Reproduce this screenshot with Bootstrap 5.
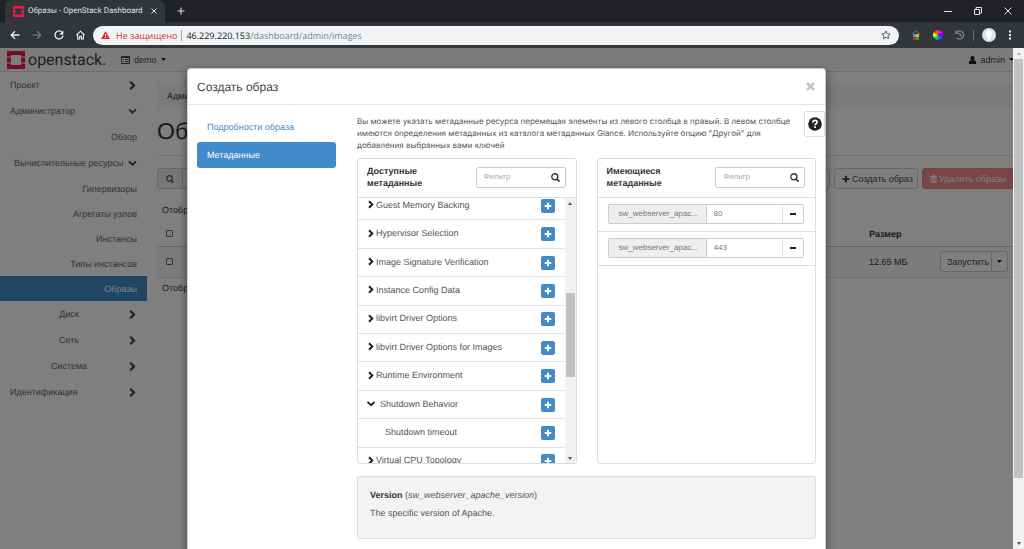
<!DOCTYPE html>
<html lang="ru">
<head>
<meta charset="utf-8">
<meta name="viewport" content="width=device-width, initial-scale=1">
<title>Образы - OpenStack Dashboard</title>
<link href="https://cdn.jsdelivr.net/npm/bootstrap@5.3.0/dist/css/bootstrap.min.css" rel="stylesheet">
<style>
body{font:9px/12px "Liberation Sans",Arial,sans-serif;color:#333;height:100vh;overflow:hidden;background:#fff;text-rendering:geometricPrecision}
svg{display:block;flex:none}
a{text-decoration:none}
button{font:inherit;color:inherit}
.win{height:100vh}
/* browser frame */
.tabstrip{height:22px;background:#202124;color:#dfe1e5;font-family:Roboto,"Noto Sans",sans-serif}
.tab-cur{width:160px;height:22px;margin-left:5px;padding:0 8px;background:#323639;border-radius:6px 6px 0 0;font-size:8px;white-space:nowrap}
.plain{border:0;background:none;padding:0;display:flex;align-items:center;justify-content:center}
.toolbar{height:26px;background:#323639;padding:0 12px 0 10px;color:#f1f3f4}
.omni{height:19px;border-radius:10px;background:#f1f3f4;margin-left:8px;padding:0 8px;font:9px/19px "Open Sans","Noto Sans",sans-serif;color:#80868b}
.omni .warn{color:#d93025;margin-left:6px}
.url b{font-weight:400;color:#202124}
.rule{width:1px;height:11px;background:#9aa0a6}
.avatar{width:14px;height:14px;border-radius:50%;background:#dfe1e5}
/* page */
.stage{position:relative;min-width:0;overflow:hidden}
.topnav{height:24px;background:#f8f8f8;border-bottom:1px solid #dadada;padding:0 0 0 7px;color:#444}
.brand-txt{font:16px/20px Roboto,sans-serif;color:#3c3c3c;width:77px}
.side{width:147px;flex:none;color:#666}
.side a{display:flex;align-items:center;justify-content:flex-end;height:25px;padding:0 10px;color:inherit}
.side a.grp{height:26px;justify-content:space-between}
.side a.on{background:#428bca;color:#fff}
.side svg{color:#444}
.mainarea{flex:none;width:calc(100% - 141px);padding:12px 0 0 10px}
.crumb{height:24px;background:#f5f5f5;border-radius:3px;padding:6px 10px}
.ttl{font-size:23px;line-height:28px;font-weight:400;margin:9px 0 10px;color:#333}
.bar-act{border-top:1px solid #e4e4e4;padding-top:12px}
.ob{height:21px;border:1px solid #ccc;border-radius:3px;background:#fff;display:flex;align-items:center;gap:2px;padding:0 7px;white-space:nowrap;color:#444}
.ob.del{background:#f08c8c;border-color:#ee8080;color:#fff;width:97px}
.ob.new{width:84px}
.ob.run{width:52px;padding:0 6px}
.srch{height:21px;border:1px solid #ccc;border-radius:3px;display:flex;color:#555}
.srch span{width:25px;background:#eee;border-right:1px solid #ccc;display:flex;align-items:center;justify-content:center}
.srch input{border:0;background:none;min-width:0;padding:0 4px;font:inherit}
.count{margin:0;padding:15px 5px 6px}
.imgs{width:100%;table-layout:fixed;border-collapse:collapse}
.imgs th,.imgs td{padding:0 9px;vertical-align:middle}
.imgs th{height:24px}
.imgs thead{border-bottom:1px solid #ccc}
.imgs tbody tr{height:31px;background:#f9f9f9;border-bottom:1px solid #ddd}
.imgs input{display:block;appearance:none;width:7px;height:7px;border:1px solid #666;border-radius:1px;margin:0}
.c-size{width:80px}
.c-act{width:79px}
/* scrollbars */
.sbar{width:11px;background:#f1f1f1;flex:none;display:flex;flex-direction:column;align-items:center;padding:4px 0}
.sbar i{width:9px;background:#c1c1c1}
.tri{border:2px solid transparent;border-top:0;border-bottom:3px solid #555}
.tri.dn{border-top:3px solid #555;border-bottom:0}
.tri.off{border-bottom-color:#aaa}
/* dialog */
.shade{position:absolute;inset:0;background:rgba(0,0,0,.5);display:flex;justify-content:center;align-items:flex-start;padding-top:20px}
.dlg{width:639px;background:#fff;border:1px solid rgba(0,0,0,.2);border-radius:4px;box-shadow:0 3px 9px rgba(0,0,0,.5);height:600px;color:#555}
.dlg-head{height:36px;border-bottom:1px solid #e5e5e5;padding:0 9px;color:#444}
.dlg-head h2{font-size:12px;line-height:16px;margin:0}
.steps{width:139px;flex:none;padding-top:9px}
.steps a{display:block;height:26px;line-height:26px;padding:0 10px;margin-bottom:2px;border-radius:3px;color:#428bca}
.steps a.on{background:#428bca;color:#fff}
.content-col{min-width:0;padding-left:21px}
.intro{height:53px}
.intro p{margin:0;padding-top:10px;white-space:nowrap;width:0;font-family:Inter,"Liberation Sans",sans-serif;font-size:8px}
.help{width:21px;height:26px;border:1px solid #ddd;border-radius:3px 0 0 3px;background:#fff;color:#333;margin-top:6px}
.pane{border:1px solid #ddd;border-radius:3px;height:306px;overflow:hidden;flex:1 1 0;min-width:0}
.pane-head{height:39px;border-bottom:1px solid #ddd;padding:0 10px 2px 9px}
.pane-head h3{font-size:9px;line-height:12px;font-weight:700;margin:0;color:#333;width:80px}
.filt{width:90px;height:21px;border:1px solid #ccc;border-radius:2px;padding:0 5px 0 7px;color:#333}
.filt input{border:0;padding:0;width:100%;min-width:0;font-size:8px;outline:0}
.filt input::placeholder{color:#aaa}
.scroller{height:266px;overflow:hidden}
.rows{height:284px;margin-top:-6px;display:flex;flex-direction:column}
.rows>div{flex:1;display:flex;align-items:center;justify-content:space-between;border-bottom:1px solid #e2e2e2;padding:0 10px 0 9px}
.rows a{display:flex;align-items:center;gap:1px;color:inherit;margin-top:-2px}
.rows a svg{color:#222}
.rows a.sub-it{padding-left:18px}
.rows .add{width:14px;height:14px;background:#428bca;border-radius:2px;color:#fff}
.pair{height:34px;border-bottom:1px solid #ddd;padding:0 11px 2px 10px}
.pair>div{height:20px;border:1px solid #ccc;border-radius:2px;min-width:0}
.pair label{width:98px;flex:none;background:#eee;border-right:1px solid #ccc;padding-left:10px;line-height:18px;color:#777;font-size:8px}
.pair input{border:0;min-width:0;width:0;padding:0 7px;font-size:8px;color:#777;flex:1}
.pair button{width:21px;flex:none;color:#222}
.note{margin-top:12px;height:63px;background:#f3f3f3;border:1px solid #ddd;border-radius:2px;padding:12px}
.note p{margin:0 0 6px}
.note b{color:#333}
</style>
</head>
<body>
<svg width="0" height="0" class="position-absolute">
<defs>
<symbol id="cr" viewBox="0 0 8 8"><path d="M2 .7 5.300 4 2 7.300" fill="none" stroke="currentColor" stroke-width="2"/></symbol>
<symbol id="cd" viewBox="0 0 8 8"><path d="M.5 2.400 4 5.600 7.500 2.400" fill="none" stroke="currentColor" stroke-width="1.900"/></symbol>
<symbol id="pl" viewBox="0 0 8 8"><path d="M4 .7v6.600M.7 4h6.600" stroke="currentColor" stroke-width="2"/></symbol>
<symbol id="mg" viewBox="0 0 8 8"><circle cx="3.400" cy="3.400" r="2.700" fill="none" stroke="currentColor" stroke-width="1.200"/><path d="M5.200 5.200 7.600 7.600" stroke="currentColor" stroke-width="1.500"/></symbol>
<symbol id="os" viewBox="0 0 18 18"><path d="M1 0h16a1 1 0 0 1 1 1v4.500h-4V4H4v1.500H0V1a1 1 0 0 1 1-1zM0 6.500h4v5H0zM14 6.500h4v5h-4zM0 12.500h4V14h10v-1.500h4V17a1 1 0 0 1-1 1H1a1 1 0 0 1-1-1z" fill="currentColor"/></symbol>
</defs>
</svg>
<div class="win d-flex flex-column">
  <header>
    <div class="tabstrip d-flex align-items-center">
      <div class="tab-cur d-flex align-items-center">
        <svg width="11" height="11" style="color:#ed1944"><use href="#os"/></svg>
        <span class="ms-1 flex-grow-1">Образы - OpenStack Dashboard</span>
        <button class="plain" aria-label="Закрыть вкладку"><svg width="6" height="6" viewBox="0 0 6 6"><path d="m.5.5 5 5m0-5-5 5" stroke="currentColor"/></svg></button>
      </div>
      <button class="plain ms-2 ps-1" aria-label="Новая вкладка"><svg width="8" height="8" viewBox="0 0 9 9"><path d="M4.500.500v8M.5 4.500h8" stroke="currentColor" stroke-width="1.200"/></svg></button>
      <div class="ms-auto d-flex align-items-center pe-2 me-1" style="gap:22px">
        <button class="plain" aria-label="Свернуть"><svg width="8" height="8" viewBox="0 0 8 8"><path d="M0 4.500h8" stroke="currentColor"/></svg></button>
        <button class="plain" aria-label="Окно"><svg width="8" height="8" viewBox="0 0 8 8"><path d="M.5 2.500h5v5h-5zM2 2V.5h5.500V6H6" fill="none" stroke="currentColor"/></svg></button>
        <button class="plain" aria-label="Закрыть"><svg width="8" height="8" viewBox="0 0 8 8"><path d="m.5.5 7 7m0-7-7 7" stroke="currentColor"/></svg></button>
      </div>
    </div>
    <div class="toolbar d-flex align-items-center">
      <div class="d-flex" style="gap:12px">
        <button class="plain" aria-label="Назад"><svg width="10" height="10" viewBox="0 0 10 10"><path d="M9.500 5H1.500M5 1.200 1.200 5 5 8.800" fill="none" stroke="currentColor" stroke-width="1.300"/></svg></button>
        <button class="plain" aria-label="Вперёд"><svg width="10" height="10" viewBox="0 0 10 10"><path d="M.5 5h8M5 1.200 8.800 5 5 8.800" fill="none" stroke="#7d8185" stroke-width="1.200"/></svg></button>
        <button class="plain" aria-label="Обновить"><svg width="10" height="10" viewBox="0 0 10 10"><path d="M8.300 2.600A4 4 0 1 0 9 5.600" fill="none" stroke="currentColor" stroke-width="1.300"/><path d="M9.400.5v4h-4z" fill="currentColor"/></svg></button>
        <button class="plain" aria-label="Домой"><svg width="9" height="10" viewBox="0 0 9 10"><path d="M.5 5 4.500 1.200 8.500 5M1.600 4.500V9h2V6.200h1.800V9h2V4.500" fill="none" stroke="currentColor" stroke-width="1.100"/></svg></button>
      </div>
      <div class="omni d-flex align-items-center flex-grow-1">
        <svg width="9" height="8" viewBox="0 0 9 8"><path d="M4.500 0 9 8H0z" fill="#d93025"/><path d="M4.500 3v2.400M4.500 6v1" stroke="#fff" stroke-width=".9"/></svg>
        <span class="warn">Не защищено</span><span class="rule mx-1"></span>
        <span class="url flex-grow-1"><b>46.229.220.153</b>/dashboard/admin/images</span>
        <button class="plain" aria-label="В закладки"><svg width="10" height="10" viewBox="0 0 10 10"><path d="m5 .9 1.200 2.700 3 .3L7 5.900l.6 2.900L5 7.300 2.400 8.800 3 5.900.8 3.900l3-.3z" fill="none" stroke="#5f6368"/></svg></button>
      </div>
      <div class="d-flex align-items-center ms-2 ps-1">
        <svg width="10" height="11" viewBox="0 0 10 11"><path d="M.5 4.500 5 1l4.500 3.500" fill="none" stroke="#6d7074"/><path d="M2 4h3v3H2z" fill="#2aa7e0"/><path d="M5 4h3v3H5z" fill="#f5a623"/><path d="M2 7h3v3H2z" fill="#d22"/><path d="M5 7h3v3H5z" fill="#2a3"/></svg>
        <svg class="ms-2 me-1 ps-1" width="14" height="10" viewBox="0 0 10 10"><path d="M5 5V0a5 5 0 0 1 4.300 2.500z" fill="#f0f"/><path d="m5 5 4.300-2.500a5 5 0 0 1 0 5z" fill="#80f"/><path d="m5 5 4.300 2.500A5 5 0 0 1 5 10z" fill="#06f"/><path d="M5 5v5A5 5 0 0 1 .7 7.500z" fill="#0d5"/><path d="M5 5 .7 7.500a5 5 0 0 1 0-5z" fill="#df0"/><path d="M5 5 .7 2.500A5 5 0 0 1 5 0z" fill="#f50"/></svg>
        <svg class="ms-2" width="10" height="10" viewBox="0 0 10 10"><path d="M1.200 3A4 4 0 1 1 2 8M5 2.800V5.200L6.800 6.300M1 .8v2.700h2.700" fill="none" stroke="#85898d" stroke-width="1.200"/></svg>
        <span class="rule mx-2 opacity-50"></span>
        <svg class="avatar" viewBox="0 0 14 14"><ellipse cx="7" cy="6" rx="3" ry="3.800" fill="#fff"/><path d="M6 9h2v3H6z" fill="#fff"/></svg>
        <button class="plain ms-2 ps-1" aria-label="Меню"><svg width="4" height="10" viewBox="0 0 4 10"><path d="M1 .5h2v2H1zM1 4h2v2H1zM1 7.500h2v2H1z" fill="currentColor"/></svg></button>
      </div>
    </div>
  </header>

  <div class="d-flex flex-grow-1 overflow-hidden">
    <div class="stage flex-grow-1">
      <nav class="topnav d-flex align-items-center">
        <svg width="18" height="18" style="color:#ed1944"><use href="#os"/></svg>
        <span class="brand-txt" style="margin-left:3px">openstack.</span>
        <button class="plain ms-3 gap-1"><svg width="9" height="8" viewBox="0 0 9 8"><path d="M.5.5h8v7h-8zM.5 1.500h8M2 3.500h1M4 3.500h3.500M2 5.500h1M4 5.500h3.500" fill="none" stroke="#444"/></svg>demo<svg width="5" height="3"><path d="M0 0h5L2.500 3z" fill="#222"/></svg></button>
        <button class="plain ms-auto gap-1"><svg width="7" height="8" viewBox="0 0 7 8"><circle cx="3.500" cy="2.200" r="2.100" fill="#222"/><path d="M0 8V6q0-2 3.500-2T7 6v2z" fill="#222"/></svg>admin<svg width="4" height="3"><path d="M0 0h5L2.500 3z" fill="#222"/></svg></button>
      </nav>
      <div class="d-flex">
        <nav class="side">
          <a class="grp" href="#">Проект<svg width="9" height="9"><use href="#cr"/></svg></a>
          <a class="grp" href="#">Администратор<svg width="9" height="8"><use href="#cd"/></svg></a>
          <a class="grp justify-content-end" href="#">Обзор</a>
          <a class="grp" href="#"><span class="ps-1 text-nowrap">Вычислительные ресурсы</span><svg width="9" height="8"><use href="#cd"/></svg></a>
          <a href="#">Гипервизоры</a>
          <a href="#">Агрегаты узлов</a>
          <a href="#">Инстансы</a>
          <a href="#">Типы инстансов</a>
          <a href="#" class="on">Образы</a>
          <a class="grp" href="#"><span class="flex-grow-1 text-center">Диск</span><svg width="9" height="9"><use href="#cr"/></svg></a>
          <a class="grp" href="#"><span class="flex-grow-1 text-center">Сеть</span><svg width="9" height="9"><use href="#cr"/></svg></a>
          <a class="grp" href="#"><span class="flex-grow-1 text-center">Система</span><svg width="9" height="9"><use href="#cr"/></svg></a>
          <a class="grp" href="#">Идентификация<svg width="9" height="9"><use href="#cr"/></svg></a>
        </nav>
        <main class="mainarea">
          <div class="crumb">Админ</div>
          <h1 class="ttl">Образы</h1>
          <div class="bar-act d-flex gap-1">
            <div class="srch flex-grow-1"><span><svg width="8" height="8"><use href="#mg"/></svg></span><input aria-label="Поиск" placeholder="Нажмите"></div>
            <button class="ob new"><svg width="8" height="8"><use href="#pl"/></svg>Создать образ</button>
            <button class="ob del"><svg width="7" height="8" viewBox="0 0 7 8"><path d="M0 1.500h7M2.300 1V.5h2.400V1M1 2.500v5h5v-5zM2.700 3v4M4.300 3v4" fill="none" stroke="#fff" stroke-width=".9"/></svg>Удалить образы</button>
          </div>
          <p class="count">Отображено</p>
          <table class="imgs">
            <colgroup><col><col class="c-size"><col class="c-act"></colgroup>
            <thead><tr><th><input type="checkbox" aria-label="Выбрать все"></th><th>Размер</th><th></th></tr></thead>
            <tbody><tr><td><input type="checkbox" aria-label="Выбрать образ"></td><td>12.65 МБ</td><td class="p-0"><div class="d-flex"><button class="ob run rounded-end-0">Запустить</button><button class="ob rounded-start-0 border-start-0 px-1" aria-label="Действия"><svg width="7" height="3"><path d="M1 0h5L3.500 3z" fill="#222"/></svg></button></div></td></tr></tbody>
          </table>
          <p class="count pt-1">Отображено</p>
        </main>
      </div>

      <div class="shade">
        <section class="dlg" role="dialog" aria-labelledby="dt">
          <div class="dlg-head d-flex align-items-center justify-content-between">
            <h2 id="dt" class="fw-normal">Создать образ</h2>
            <button class="plain" aria-label="Закрыть окно"><svg width="11" height="9" viewBox="0 0 10 9"><path d="m1.500 1 7 7m0-7-7 7" stroke="#c4c4c4" stroke-width="2.600"/></svg></button>
          </div>
          <div class="d-flex" style="padding-left:9px">
            <nav class="steps">
              <a href="#">Подробности образа</a>
              <a href="#" class="on">Метаданные</a>
            </nav>
            <div class="content-col flex-grow-1">
              <div class="intro d-flex">
                <p class="flex-grow-1">Вы можете указать метаданные ресурса перемещая элементы из левого столбца в правый. В левом столбце<br>имеются определения метаданных из каталога метаданных Glance. Используйте опцию "Другой" для<br>добавления выбранных вами ключей</p>
                <button class="plain help flex-shrink-0" aria-label="Помощь"><svg width="14" height="14" viewBox="0 0 14 14"><circle cx="7" cy="7" r="6.800" fill="#222"/><path d="M4.900 5.400q0-2 2.100-2t2.100 1.800q0 1-1.200 1.700-.9.500-.9 1.300" fill="none" stroke="#fff" stroke-width="1.700"/><path d="M6.100 9.300h1.800v1.700H6.100z" fill="#fff"/></svg></button>
              </div>
              <div style="padding-right:9px">
              <div class="d-flex" style="gap:20px">
                <div class="pane">
                  <div class="pane-head d-flex align-items-center justify-content-between">
                    <h3>Доступные метаданные</h3>
                    <div class="filt d-flex align-items-center"><input placeholder="Фильтр" aria-label="Фильтр доступных"><svg width="9" height="9"><use href="#mg"/></svg></div>
                  </div>
                  <div class="scroller d-flex">
                    <div class="rows flex-grow-1">
                      <div><a href="#"><svg width="8" height="9"><use href="#cr"/></svg>Guest Memory Backing</a><button class="plain add" aria-label="Добавить"><svg width="8" height="8"><use href="#pl"/></svg></button></div>
                      <div><a href="#"><svg width="8" height="9"><use href="#cr"/></svg>Hypervisor Selection</a><button class="plain add" aria-label="Добавить"><svg width="8" height="8"><use href="#pl"/></svg></button></div>
                      <div><a href="#"><svg width="8" height="9"><use href="#cr"/></svg>Image Signature Verification</a><button class="plain add" aria-label="Добавить"><svg width="8" height="8"><use href="#pl"/></svg></button></div>
                      <div><a href="#"><svg width="8" height="9"><use href="#cr"/></svg>Instance Config Data</a><button class="plain add" aria-label="Добавить"><svg width="8" height="8"><use href="#pl"/></svg></button></div>
                      <div><a href="#"><svg width="8" height="9"><use href="#cr"/></svg>libvirt Driver Options</a><button class="plain add" aria-label="Добавить"><svg width="8" height="8"><use href="#pl"/></svg></button></div>
                      <div><a href="#"><svg width="8" height="9"><use href="#cr"/></svg>libvirt Driver Options for Images</a><button class="plain add" aria-label="Добавить"><svg width="8" height="8"><use href="#pl"/></svg></button></div>
                      <div><a href="#"><svg width="8" height="9"><use href="#cr"/></svg>Runtime Environment</a><button class="plain add" aria-label="Добавить"><svg width="8" height="8"><use href="#pl"/></svg></button></div>
                      <div><a href="#"><svg class="me-1" width="8" height="9"><use href="#cd"/></svg>Shutdown Behavior</a><button class="plain add" aria-label="Добавить"><svg width="8" height="8"><use href="#pl"/></svg></button></div>
                      <div><a href="#" class="sub-it">Shutdown timeout</a><button class="plain add" aria-label="Добавить"><svg width="8" height="8"><use href="#pl"/></svg></button></div>
                      <div><a href="#"><svg width="8" height="9"><use href="#cr"/></svg>Virtual CPU Topology</a><button class="plain add" aria-label="Добавить"><svg width="8" height="8"><use href="#pl"/></svg></button></div>
                    </div>
                    <div class="sbar"><span class="tri"></span><i style="height:84px;margin:88px 0 auto"></i><span class="tri dn"></span></div>
                  </div>
                </div>
                <div class="pane">
                  <div class="pane-head d-flex align-items-center justify-content-between">
                    <h3>Имеющиеся метаданные</h3>
                    <div class="filt d-flex align-items-center"><input placeholder="Фильтр" aria-label="Фильтр имеющихся"><svg width="9" height="9"><use href="#mg"/></svg></div>
                  </div>
                  <div class="pair d-flex align-items-center"><div class="d-flex flex-grow-1"><label for="p1">sw_webserver_apac...</label><input id="p1" value="80"><button class="plain border-start" aria-label="Убрать"><svg width="6" height="2"><path d="M0 1h6" stroke="currentColor" stroke-width="2"/></svg></button></div></div>
                  <div class="pair d-flex align-items-center"><div class="d-flex flex-grow-1"><label for="p2">sw_webserver_apac...</label><input id="p2" value="443"><button class="plain border-start" aria-label="Убрать"><svg width="6" height="2"><path d="M0 1h6" stroke="currentColor" stroke-width="2"/></svg></button></div></div>
                </div>
              </div>
              <div class="note"><p><b>Version</b> (<em>sw_webserver_apache_version</em>)</p><p>The specific version of Apache.</p></div>
              </div>
            </div>
          </div>
        </section>
      </div>
    </div>
    <div class="sbar"><span class="tri off"></span><i style="height:85%;margin:4px 0 auto"></i><span class="tri dn"></span></div>
  </div>
</div>
<script src="https://cdn.jsdelivr.net/npm/bootstrap@5.3.0/dist/js/bootstrap.bundle.min.js"></script>
</body>
</html>
